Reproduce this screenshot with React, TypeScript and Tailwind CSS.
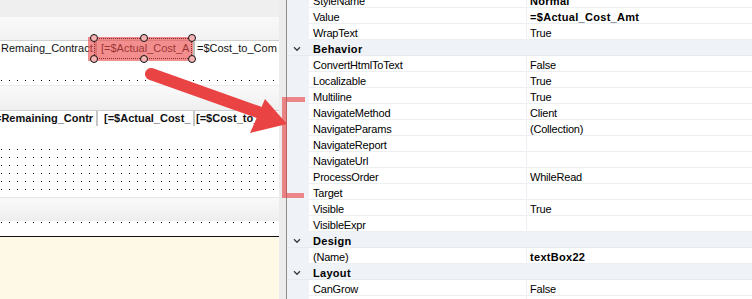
import React from "react";

type Row = { k: string; v?: string; bold?: boolean; cat?: boolean };

const rows: Row[] = [
  { k: "StyleName", v: "Normal", bold: true },
  { k: "Value", v: "=$Actual_Cost_Amt", bold: true },
  { k: "WrapText", v: "True" },
  { k: "Behavior", cat: true },
  { k: "ConvertHtmlToText", v: "False" },
  { k: "Localizable", v: "True" },
  { k: "Multiline", v: "True" },
  { k: "NavigateMethod", v: "Client" },
  { k: "NavigateParams", v: "(Collection)" },
  { k: "NavigateReport", v: "" },
  { k: "NavigateUrl", v: "" },
  { k: "ProcessOrder", v: "WhileRead" },
  { k: "Target", v: "" },
  { k: "Visible", v: "True" },
  { k: "VisibleExpr", v: "" },
  { k: "Design", cat: true },
  { k: "(Name)", v: "textBox22", bold: true },
  { k: "Layout", cat: true },
  { k: "CanGrow", v: "False" },
  { k: "CanShrink", v: "False" },
];

const Chevron = () => (
  <svg width="8" height="6" viewBox="0 0 8 6" className="block">
    <path d="M1 1.2 L4 4.3 L7 1.2" fill="none" stroke="#3a3a3a" strokeWidth="1.3" />
  </svg>
);

const Handle = ({ x, y }: { x: number; y: number }) => (
  <div
    className="absolute w-[8px] h-[8px] rounded-full border-[1.5px] border-[#111] bg-[#f6b3b3]"
    style={{ left: x - 4, top: y - 4 }}
  />
);

function PropRow({ r }: { r: Row }) {
  if (r.cat) {
    return (
      <div className="flex h-[16px] shrink-0 bg-[#eff2f7] border-b border-[#e7ebf1]">
        <div className="w-[22px] pl-[6px] pt-[6px]">
          <Chevron />
        </div>
        <div className="pl-[4px] pt-[1px] leading-[16px] font-bold tracking-[0.3px] text-black">{r.k}</div>
      </div>
    );
  }
  return (
    <div className="flex h-[16px] shrink-0">
      <div className="w-[22px] bg-[#eff2f7]" />
      <div className="w-[218px] border-b border-r border-[#eceff3] pl-[4px] pt-[1px] leading-[16px] whitespace-nowrap tracking-[-0.2px] text-black">
        {r.k}
      </div>
      <div
        className={
          "flex-1 border-b border-[#eceff3] pl-[3px] pt-[1px] leading-[16px] whitespace-nowrap text-black " +
          (r.bold ? "font-bold tracking-[0.3px]" : "tracking-[-0.2px]")
        }
      >
        {r.v}
      </div>
    </div>
  );
}

export default function App() {
  return (
    <div className="w-[752px] h-[299px] flex overflow-hidden bg-white relative font-['Liberation_Sans',Arial,sans-serif] text-[11px]">
      {/* Left: report designer */}
      <div className="w-[279px] flex flex-col relative shrink-0">
        <div className="h-[17px] shrink-0 bg-[#efefef]" />
        <div className="h-[24px] shrink-0 bg-gradient-to-b from-[#f9f9f9] to-[#f2f2f2] border-b border-[#cfcfcf]" />
        {/* row 1 */}
        <div className="h-[20px] shrink-0 flex bg-white leading-[12px] text-[#111] whitespace-nowrap">
          <div className="w-[95px] overflow-hidden pl-[1px] pt-[1px]">Remaing_Contract</div>
          <div className="w-[2px] h-[15px] mt-[1px] bg-[#bdbdbd]" />
          <div className="w-[96px] overflow-hidden pl-[4px] pt-[1px]">[=$Actual_Cost_A</div>
          <div className="w-[2px] h-[15px] mt-[1px] bg-[#bdbdbd]" />
          <div className="flex-1 overflow-hidden pl-[2px] pt-[1px]">=$Cost_to_Com</div>
        </div>
        {/* dots A */}
        <div className="h-[24px] shrink-0 bg-white bg-[radial-gradient(circle_at_1.5px_1.5px,#000_0.75px,transparent_0.8px)] [background-size:8px_8px] [background-position:0px_18px] bg-repeat-x" />
        {/* band */}
        <div className="h-[26px] shrink-0 bg-gradient-to-b from-[#fafafa] to-[#efefef] border-t border-[#ececec] border-b border-b-[#cdcdcd]" />
        {/* row 2 */}
        <div className="h-[15px] shrink-0 flex bg-white leading-[14px] font-bold text-[#111] whitespace-nowrap">
          <div className="w-[96px] overflow-hidden">
            <span className="ml-[-5px]">=Remaining_Contr</span>
          </div>
          <div className="w-[2px] bg-[#c6c6c6]" />
          <div className="w-[95px] overflow-hidden pl-[6px]">[=$Actual_Cost_</div>
          <div className="w-[2px] bg-[#c6c6c6]" />
          <div className="flex-1 overflow-hidden pl-[1px]">[=$Cost_to_</div>
        </div>
        <div className="h-[20px] shrink-0 bg-white" />
        {/* dots B */}
        <div className="h-[51px] shrink-0 bg-white bg-[radial-gradient(circle_at_1.5px_1.5px,#000_0.75px,transparent_0.8px)] [background-size:8px_8px] [background-position:0px_2px]" />
        {/* band */}
        <div className="h-[24px] shrink-0 bg-gradient-to-b from-[#fafafa] to-[#eeeeee] border-t border-[#e6e6e6]" />
        {/* dots C */}
        <div className="h-[15px] shrink-0 bg-white bg-[radial-gradient(circle_at_1.5px_1.5px,#000_0.75px,transparent_0.8px)] [background-size:8px_8px] [background-position:0px_0px] bg-repeat-x" />
        <div className="h-[1px] shrink-0 bg-[#111]" />
        <div className="flex-1 bg-[#fef9e7]" />

        {/* selection */}
        <div className="absolute left-[88px] top-[37px] w-[105px] h-[24px] bg-[rgba(236,72,72,0.62)]" />
        <div className="absolute left-[94px] top-[38px] w-[98px] h-[21px] border border-dotted border-[#8a2a2a]" />
        <Handle x={94} y={38} />
        <Handle x={144} y={38} />
        <Handle x={192} y={38} />
        <Handle x={94} y={59} />
        <Handle x={144} y={59} />
        <Handle x={192} y={59} />
      </div>

      {/* scroll strip */}
      <div className="w-[8px] shrink-0 bg-[#ececec] border-r border-[#8c8c8c]" />

      {/* property grid */}
      <div className="flex-1 flex flex-col -mt-[8px]">
        {rows.map((r, i) => (
          <PropRow key={i} r={r} />
        ))}
      </div>

      {/* annotation bracket */}
      <div className="absolute left-[282px] top-[97px] w-[23px] h-[5px] bg-[rgba(232,64,64,0.6)]" />
      <div className="absolute left-[282px] top-[102px] w-[5px] h-[91px] bg-[rgba(232,64,64,0.6)]" />
      <div className="absolute left-[282px] top-[193px] w-[22px] h-[5px] bg-[rgba(232,64,64,0.6)]" />

      {/* arrow */}
      <svg className="absolute left-0 top-0 pointer-events-none" width="752" height="299" viewBox="0 0 752 299">
        <line x1="151" y1="74" x2="258" y2="112" stroke="#e94343" strokeWidth="12" strokeLinecap="round" />
        <polygon points="265,99 250,133 287,124" fill="#e94343" />
      </svg>
    </div>
  );
}
